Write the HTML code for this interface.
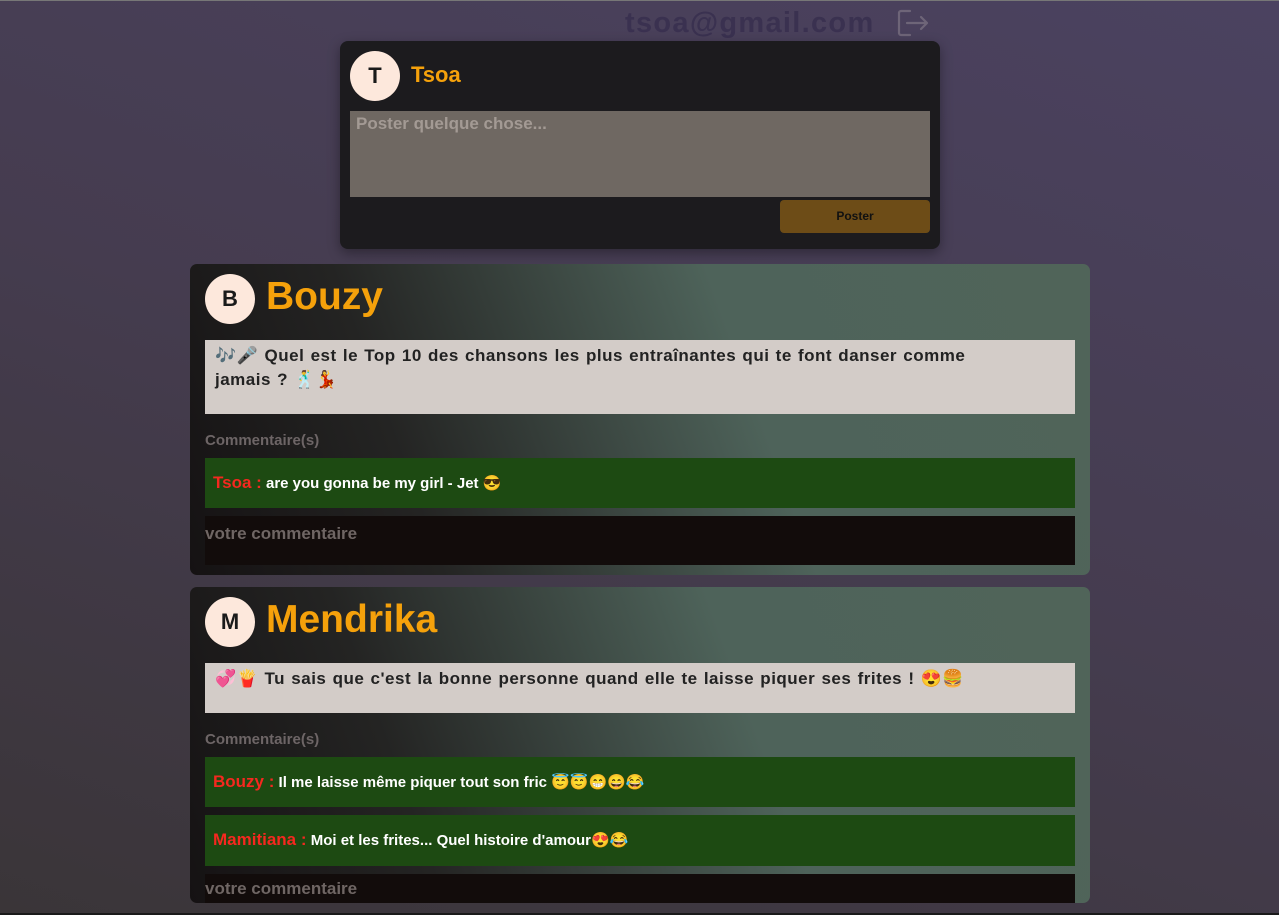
<!DOCTYPE html>
<html><head><meta charset="utf-8"><style>
*{box-sizing:border-box;margin:0;padding:0}
body{width:1279px;height:915px;overflow:hidden;position:relative;font-family:"Liberation Sans","Noto Sans CJK JP",sans-serif;font-weight:bold;background:linear-gradient(20deg,#3a3538 0%,#453c4f 50%,#4b4260 100%)}
.abs{position:absolute}
.email{left:625px;top:7px;font-size:29px;color:#3a3150;letter-spacing:1.3px}
.top{left:340px;top:41px;width:600px;height:208px;background:#1c1b1e;border-radius:8px;box-shadow:0 4px 12px rgba(0,0,0,.35)}
.av{position:absolute;width:50px;height:50px;border-radius:50%;background:#fde8dc;color:#1a1a1a;font-size:22px;text-align:center;line-height:50px}
.ta{left:10px;top:70px;width:580px;height:86px;background:#6f6862;color:#a39a94;font-size:17px;padding:3px 6px}
.btn{left:440px;top:159px;width:150px;height:33px;background:#6d4c17;border-radius:4px;color:#111;font-size:12px;text-align:center;line-height:33px}
.card{left:190px;width:900px;border-radius:7px;background:linear-gradient(70deg,#151213 0%,#242423 25%,#4e635a 62%,#506459 100%)}
.name{position:absolute;left:76px;color:#f5a10b;font-size:39px}
.post{position:absolute;left:15px;width:870px;background:#d3ccc8;color:#222;font-size:17px;padding:4px 10px;line-height:24px;letter-spacing:0.5px;word-spacing:1px;white-space:nowrap}
.lbl{position:absolute;left:15px;color:#6d6566;font-size:15px}
.cm{position:absolute;left:15px;width:870px;height:50px;background:#1d4a12;color:#fff;font-size:15px;padding:0 8px;line-height:50px}
.cm span{color:#f5281f;font-size:17px}
.in{position:absolute;left:15px;width:870px;background:#120c0b;color:#6f6664;font-size:17px;padding:8px 0 0}
</style></head><body>
<div class="abs" style="left:0;top:0;width:1279px;height:1px;background:#777"></div>
<div class="abs email">tsoa@gmail.com</div>
<svg class="abs" style="left:896px;top:9px" width="34" height="28" viewBox="0 0 34 28" fill="none" stroke="#6e6578" stroke-width="2.2" stroke-linecap="round" stroke-linejoin="round"><path d="M14 2H5a2 2 0 0 0-2 2v20a2 2 0 0 0 2 2h9"/><path d="M11 14h20M25 8l6 6-6 6"/></svg>
<div class="abs top">
<div class="av" style="left:10px;top:10px">T</div>
<div class="abs" style="left:71px;top:21px;color:#f5a10b;font-size:22px">Tsoa</div>
<div class="abs ta">Poster quelque chose...</div>
<div class="abs btn">Poster</div>
</div>
<div class="abs card" style="top:264px;height:311px">
<div class="av" style="left:15px;top:10px">B</div>
<div class="name" style="top:11px">Bouzy</div>
<div class="post" style="top:76px;height:74px">🎶🎤 Quel est le Top 10 des chansons les plus entraînantes qui te font danser comme<br>jamais ? 🕺💃</div>
<div class="lbl" style="top:168px">Commentaire(s)</div>
<div class="cm" style="top:194px"><span>Tsoa :</span> are you gonna be my girl - Jet 😎</div>
<div class="in" style="top:252px;height:49px">votre commentaire</div>
</div>
<div class="abs card" style="top:587px;height:316px">
<div class="av" style="left:15px;top:10px">M</div>
<div class="name" style="top:11px">Mendrika</div>
<div class="post" style="top:76px;height:50px">💞🍟 Tu sais que c'est la bonne personne quand elle te laisse piquer ses frites ! 😍🍔</div>
<div class="lbl" style="top:144px">Commentaire(s)</div>
<div class="cm" style="top:170px"><span>Bouzy :</span> Il me laisse même piquer tout son fric 😇😇😁😄😂</div>
<div class="cm" style="top:228px;height:51px"><span>Mamitiana :</span> Moi et les frites... Quel histoire d'amour😍😂</div>
<div class="in" style="top:287px;height:29px;padding-top:5px">votre commentaire</div>
</div>
<div class="abs" style="left:0;top:913px;width:1279px;height:2px;background:#1a1a1a"></div>
</body></html>
